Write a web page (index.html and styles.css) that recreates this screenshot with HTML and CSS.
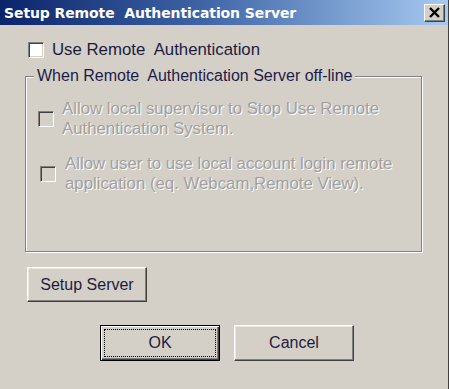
FILE: index.html
```html
<!DOCTYPE html>
<html>
<head>
<meta charset="utf-8">
<link rel="stylesheet" href="styles.css">
</head>
<body>
<div class="window">
  <div class="titlebar">
    <span class="title">Setup Remote&nbsp; Authentication Server</span>
    <span class="close">
      <svg width="13" height="11" viewBox="0 0 13 11"><path d="M2 1 L11 10 M11 1 L2 10" stroke="#000" stroke-width="2.4" fill="none"/></svg>
    </span>
  </div>
  <div class="content">
    <label class="check-row">
      <span class="box"></span>
      <span>Use Remote&nbsp; Authentication</span>
    </label>
    <fieldset class="group">
      <legend class="legend">When Remote&nbsp; Authentication Server off-line</legend>
      <div class="item item-a">
        <span class="box box-disabled"></span>
        <span class="item-text">Allow local supervisor to Stop Use Remote<br>Authentication System.</span>
      </div>
      <div class="item item-b">
        <span class="box box-disabled"></span>
        <span class="item-text">Allow user to use local account login remote<br>application (eq. Webcam,Remote View).</span>
      </div>
    </fieldset>
    <button class="btn btn-setup">Setup Server</button>
    <div class="actions">
      <button class="btn btn-default">OK</button>
      <button class="btn">Cancel</button>
    </div>
  </div>
</div>
</body>
</html>
```
FILE: styles.css
```css
html, body {
  margin: 0;
  padding: 0;
  background: #d4d0c8;
}

.window {
  width: 449px;
  height: 389px;
  box-sizing: border-box;
  border-right: 1px solid #404040;
  background: #d4d0c8;
  display: flex;
  flex-direction: column;
  font-family: "Liberation Sans", Arial, sans-serif;
  font-size: 16px;
  color: #1c1c40;
}

.titlebar {
  height: 25px;
  flex: none;
  box-sizing: border-box;
  display: flex;
  align-items: center;
  justify-content: space-between;
  padding: 0 3px 0 4px;
  background: linear-gradient(to right, #0a246a 0%, #3e64a6 45%, #a6caf0 100%);
}

.title {
  color: #fff;
  font-family: "DejaVu Sans", sans-serif;
  font-weight: bold;
  font-size: 14px;
  letter-spacing: -0.1px;
}

.close {
  width: 21px;
  height: 18px;
  box-sizing: border-box;
  display: flex;
  align-items: center;
  justify-content: center;
  background: #d4d0c8;
  border: 1px solid;
  border-color: #fff #404040 #404040 #fff;
  box-shadow: inset -1px -1px #808080;
}

.content {
  display: flex;
  flex-direction: column;
  align-items: flex-start;
  padding: 16px 0 0 25px;
}

.check-row {
  display: flex;
  align-items: center;
  gap: 8px;
  margin-left: 3px;
  line-height: 18px;
  font-size: 16.8px;
}

.box {
  width: 16px;
  height: 16px;
  flex: none;
  box-sizing: border-box;
  background: #fff;
  border: 1px solid;
  border-color: #808080 #fff #fff #808080;
  box-shadow: inset 1px 1px #404040, inset -1px -1px #d4d0c8;
}

.box-disabled {
  background: #d4d0c8;
}

.group {
  margin: 8px 0 0 0;
  padding: 0 0 0 12px;
  width: 397px;
  height: 185px;
  box-sizing: border-box;
  border: 1px solid #808080;
  box-shadow: inset 1px 1px #fff, 1px 1px #fff;
  min-inline-size: 0;
}

.legend {
  margin-left: -4px;
  padding: 0 3px;
  line-height: 18px;
  background: #d4d0c8;
  color: #1c1c48;
}

.item {
  display: flex;
  align-items: center;
  gap: 8px;
  line-height: 20px;
  font-size: 16.8px;
  color: #a0a0a0;
  text-shadow: 1px 1px 0 #fff;
}

.item-a {
  margin-top: 14px;
}

.item-b {
  margin-top: 15px;
  margin-left: 2px;
  gap: 9px;
}

.btn {
  box-sizing: border-box;
  width: 120px;
  height: 35px;
  padding: 0;
  margin: 0;
  font-family: "Liberation Sans", Arial, sans-serif;
  font-size: 16px;
  color: #1c1c40;
  background: #d4d0c8;
  border: 1px solid;
  border-color: #fff #404040 #404040 #fff;
  box-shadow: inset -1px -1px #808080, inset 1px 1px #e8e6e0;
  border-radius: 0;
}

.btn-setup {
  margin: 15px 0 0 2px;
}

.actions {
  display: flex;
  gap: 14px;
  margin: 23px 0 0 75px;
}

.actions .btn {
  height: 36px;
}

.btn-default {
  border: 1px solid #000;
  box-shadow: inset 1px 1px #fff, inset -1px -1px #404040, inset -2px -2px #808080;
  outline: 1px dotted #000;
  outline-offset: -5px;
}
```
